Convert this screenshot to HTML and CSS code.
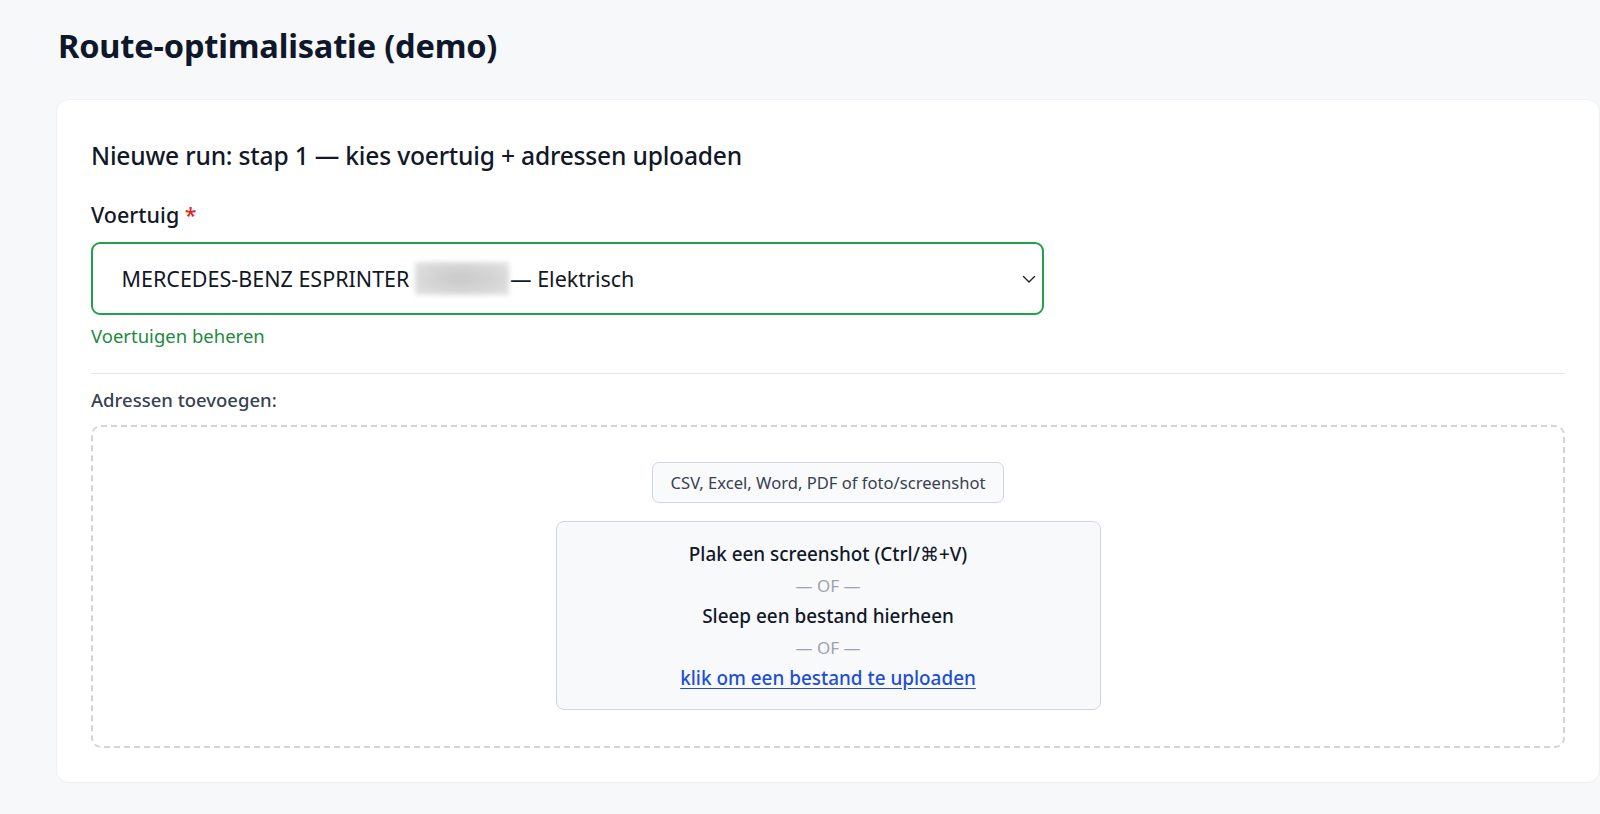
FILE: index.html
```html
<!DOCTYPE html>
<html lang="nl">
<head>
<meta charset="utf-8">
<title>Route-optimalisatie (demo)</title>
<link rel="stylesheet" href="styles.css">
</head>
<body>
<main class="page">
  <h1 class="page-title">Route-optimalisatie (demo)</h1>
  <section class="card">
    <h2 class="card-title">Nieuwe run: stap 1 — kies voertuig + adressen uploaden</h2>
    <label class="field-label">Voertuig <span class="req">*</span></label>
    <div class="select">
      <span class="select-text">MERCEDES-BENZ ESPRINTER <span class="redact"></span>— Elektrisch</span>
      <svg class="chevron" width="14" height="14" viewBox="0 0 14 14"><path d="M1.5 4.5 L7 10 L12.5 4.5" fill="none" stroke="#222" stroke-width="1.4" stroke-linecap="round" stroke-linejoin="round"/></svg>
    </div>
    <a class="manage-link" href="#">Voertuigen beheren</a>
    <hr class="divider">
    <div class="sub-label">Adressen toevoegen:</div>
    <div class="dropzone">
      <div class="pill">CSV, Excel, Word, PDF of foto/screenshot</div>
      <div class="drop-box">
        <div class="drop-line">Plak een screenshot (Ctrl/⌘+V)</div>
        <div class="or">— OF —</div>
        <div class="drop-line">Sleep een bestand hierheen</div>
        <div class="or">— OF —</div>
        <a class="upload-link" href="#">klik om een bestand te uploaden</a>
      </div>
    </div>
  </section>
</main>
</body>
</html>
```
FILE: styles.css
```css
* { box-sizing: border-box; }
html, body { margin: 0; padding: 0; }
body {
  background: #f7f8fa;
  font-family: "Noto Sans", "Open Sans", sans-serif;
  color: #111827;
  height: 814px;
  overflow: hidden;
}
.page {
  padding: 22px 1px 0 57px;
}
.page-title {
  margin: 0 0 0 1px;
  font-size: 32.6px;
  font-weight: 700;
  line-height: 48px;
  color: #0f172a;
  letter-spacing: -0.2px;
}
.card {
  margin-top: 30px;
  background: #fff;
  border-radius: 12px;
  box-shadow: 0 0 0 1px #eef0f3, 0 1px 2px rgba(0,0,0,0.03);
  padding: 38px 34px 34px 34px;
  height: 682px;
}
.card-title {
  margin: 0;
  font-size: 24.6px;
  font-weight: 500;
  line-height: 36px;
  color: #111827;
  letter-spacing: -0.2px;
}
.field-label {
  display: block;
  margin-top: 26px;
  font-size: 21.5px;
  font-weight: 500;
  line-height: 30px;
  color: #111827;
}
.req { color: #dc2626; }
.select {
  margin-top: 12px;
  width: 953px;
  height: 73px;
  border: 2.5px solid #22a04b;
  border-radius: 9px;
  display: flex;
  align-items: center;
  justify-content: space-between;
  padding: 0 6px 0 28.5px;
}
.select-text {
  font-size: 21.5px;
  color: #111827;
  display: flex;
  align-items: center;
  white-space: pre;
}
.redact {
  display: inline-block;
  width: 94px;
  height: 33px;
  background: radial-gradient(ellipse at center, #c9c9c9 0%, #d6d6d6 55%, #e4e4e4 100%);
  filter: blur(2.5px);
  margin-right: 1px;
}
.chevron { display: block; }
.manage-link {
  display: block;
  margin-top: 8px;
  font-size: 18.5px;
  line-height: 26px;
  color: #1e8a3e;
  text-decoration: none;
}
.divider {
  margin: 24px 0 0;
  border: 0;
  border-top: 1px solid #e5e7eb;
}
.sub-label {
  margin-top: 13px;
  font-size: 18.5px;
  font-weight: 500;
  line-height: 26px;
  color: #374151;
}
.dropzone {
  margin-top: 12px;
  border: 2px dashed #d1d5db;
  border-radius: 10px;
  height: 323px;
  display: flex;
  flex-direction: column;
  align-items: center;
  padding-top: 35px;
}
.pill {
  border: 1px solid #d1d5db;
  background: #f9fafb;
  border-radius: 7px;
  height: 41px;
  padding: 0 18px;
  display: flex;
  align-items: center;
  font-size: 16.6px;
  color: #374151;
}
.drop-box {
  margin-top: 18px;
  width: 545px;
  height: 189px;
  background: #f8f9fb;
  border: 1px solid #d1d5db;
  border-radius: 8px;
  display: flex;
  flex-direction: column;
  align-items: center;
  padding-top: 17px;
}
.drop-line {
  font-size: 18.9px;
  font-weight: 500;
  line-height: 31px;
  color: #111827;
}
.or {
  font-size: 17px;
  line-height: 31px;
  color: #9ca3af;
}
.upload-link {
  font-size: 18.9px;
  font-weight: 500;
  line-height: 31px;
  color: #1d4ed8;
  text-decoration: underline;
  text-underline-offset: 3px;
}
```
